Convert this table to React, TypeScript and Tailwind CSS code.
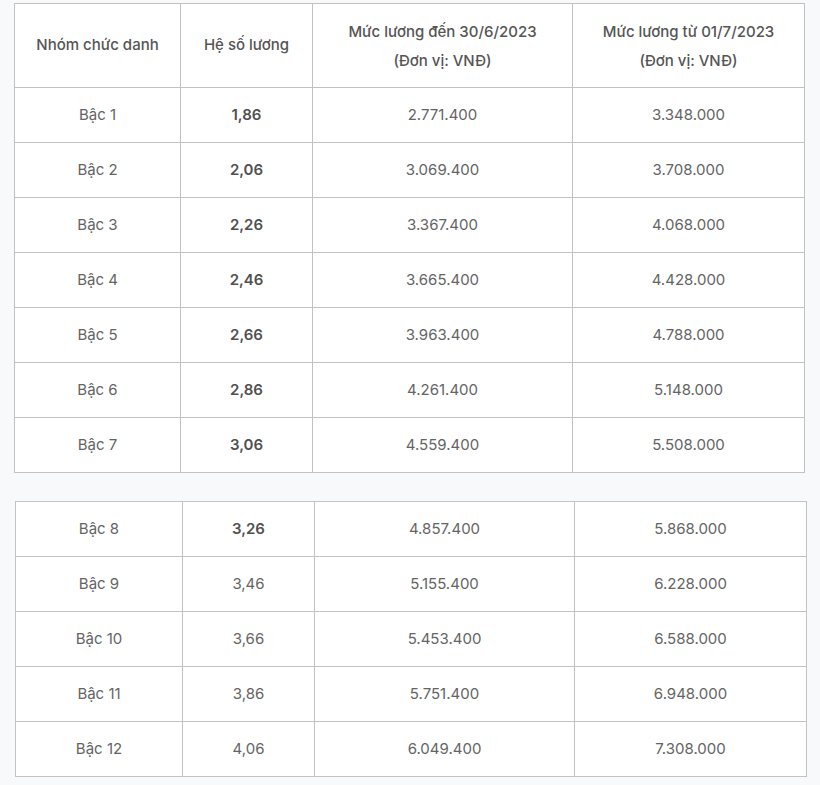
const rowsTop = [
  ["Bậc 1", "1,86", "2.771.400", "3.348.000"],
  ["Bậc 2", "2,06", "3.069.400", "3.708.000"],
  ["Bậc 3", "2,26", "3.367.400", "4.068.000"],
  ["Bậc 4", "2,46", "3.665.400", "4.428.000"],
  ["Bậc 5", "2,66", "3.963.400", "4.788.000"],
  ["Bậc 6", "2,86", "4.261.400", "5.148.000"],
  ["Bậc 7", "3,06", "4.559.400", "5.508.000"],
];

const rowsBottom = [
  ["Bậc 8", "3,26", "4.857.400", "5.868.000", true],
  ["Bậc 9", "3,46", "5.155.400", "6.228.000", false],
  ["Bậc 10", "3,66", "5.453.400", "6.588.000", false],
  ["Bậc 11", "3,86", "5.751.400", "6.948.000", false],
  ["Bậc 12", "4,06", "6.049.400", "7.308.000", false],
] as const;

const cell = "border-[1.5px] border-[#c2c2c2] text-center align-middle h-[55px] p-0";

const App: React.FC = () => {
  return (
    <div
      className="min-h-[785px] w-[820px] bg-[#f8f9fb] pt-[3px] text-[15px] text-[#646464]"
      style={{ fontFamily: "Inter, 'Open Sans', sans-serif" }}
    >
      <table className="ml-[14px] w-[790px] table-fixed border-collapse bg-white">
        <colgroup>
          <col className="w-[166px]" />
          <col className="w-[132px]" />
          <col className="w-[260px]" />
          <col className="w-[232px]" />
        </colgroup>
        <thead>
          <tr>
            <th className={`${cell} h-[84px] font-medium text-[#555]`}>Nhóm chức danh</th>
            <th className={`${cell} h-[84px] font-medium text-[#555]`}>Hệ số lương</th>
            <th className={`${cell} h-[84px] font-medium leading-[29px] text-[#555]`}>
              Mức lương đến 30/6/2023
              <br />
              (Đơn vị: VNĐ)
            </th>
            <th className={`${cell} h-[84px] font-medium leading-[29px] text-[#555]`}>
              Mức lương từ 01/7/2023
              <br />
              (Đơn vị: VNĐ)
            </th>
          </tr>
        </thead>
        <tbody>
          {rowsTop.map((r) => (
            <tr key={r[0]}>
              <td className={cell}>{r[0]}</td>
              <td className={`${cell} font-semibold text-[#505050]`}>{r[1]}</td>
              <td className={cell}>{r[2]}</td>
              <td className={cell}>{r[3]}</td>
            </tr>
          ))}
        </tbody>
      </table>

      <table className="ml-[15px] mt-[28px] w-[791px] table-fixed border-collapse bg-white">
        <colgroup>
          <col className="w-[167px]" />
          <col className="w-[132px]" />
          <col className="w-[260px]" />
          <col className="w-[232px]" />
        </colgroup>
        <tbody>
          {rowsBottom.map((r) => (
            <tr key={r[0]}>
              <td className={cell}>{r[0]}</td>
              <td className={`${cell} ${r[4] ? "font-semibold text-[#505050]" : ""}`}>{r[1]}</td>
              <td className={cell}>{r[2]}</td>
              <td className={cell}>{r[3]}</td>
            </tr>
          ))}
        </tbody>
      </table>
    </div>
  );
};

export default App;
